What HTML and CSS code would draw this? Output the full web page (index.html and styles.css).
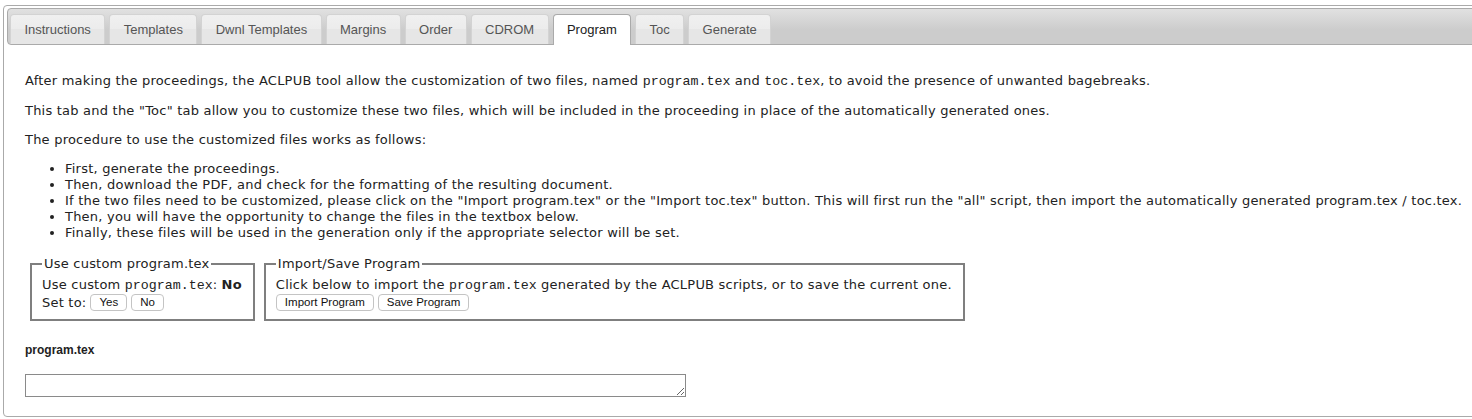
FILE: index.html
```html
<!DOCTYPE html>
<html>
<head>
<meta charset="utf-8">
<title>ACLPUB</title>
<link rel="stylesheet" href="styles.css">
</head>
<body>
<div class="widget">
  <ul class="nav">
    <li class="tab">Instructions</li>
    <li class="tab">Templates</li>
    <li class="tab">Dwnl Templates</li>
    <li class="tab">Margins</li>
    <li class="tab">Order</li>
    <li class="tab">CDROM</li>
    <li class="tab active">Program</li>
    <li class="tab">Toc</li>
    <li class="tab">Generate</li>
  </ul>
  <div class="panel">
    <p>After making the proceedings, the ACLPUB tool allow the customization of two files, named <code>program.tex</code> and <code>toc.tex</code>, to avoid the presence of unwanted bagebreaks.</p>
    <p>This tab and the "Toc" tab allow you to customize these two files, which will be included in the proceeding in place of the automatically generated ones.</p>
    <p>The procedure to use the customized files works as follows:</p>
    <ul class="steps">
      <li>First, generate the proceedings.</li>
      <li>Then, download the PDF, and check for the formatting of the resulting document.</li>
      <li>If the two files need to be customized, please click on the "Import program.tex" or the "Import toc.tex" button. This will first run the "all" script, then import the automatically generated program.tex / toc.tex.</li>
      <li>Then, you will have the opportunity to change the files in the textbox below.</li>
      <li>Finally, these files will be used in the generation only if the appropriate selector will be set.</li>
    </ul>
    <div class="boxes">
      <fieldset class="box">
        <legend>Use custom program.tex</legend>
        <div class="row">Use custom <code>program.tex</code>: <b>No</b></div>
        <div class="row btns">Set to: <button class="btn">Yes</button> <button class="btn">No</button></div>
      </fieldset>
      <fieldset class="box">
        <legend>Import/Save Program</legend>
        <div class="row">Click below to import the <code>program.tex</code> generated by the ACLPUB scripts, or to save the current one.</div>
        <div class="row btns"><button class="btn">Import Program</button> <button class="btn">Save Program</button></div>
      </fieldset>
    </div>
    <h4 class="label">program.tex</h4>
    <textarea class="editor"></textarea>
  </div>
</div>
</body>
</html>
```
FILE: styles.css
```css
html, body {
  margin: 0;
  padding: 0;
  background: #fff;
  overflow: hidden;
}
body {
  padding: 5px 0 0 3px;
}
.widget {
  width: 1490px;
  border: 1px solid #aaa;
  border-radius: 4px;
  padding: 2px 3px;
  background: #fff;
  color: #222;
  font-family: "DejaVu Sans", Verdana, sans-serif;
}
.nav {
  list-style: none;
  margin: 0;
  padding: 5px 2px 0 2px;
  display: flex;
  gap: 4px;
  border: 1px solid #aaa;
  border-radius: 4px;
  background: linear-gradient(#e1e1e1, #cccccc 60%, #cccccc);
  height: 30px;
  box-sizing: content-box;
}
.tab {
  font-family: "Liberation Sans", Arial, sans-serif;
  font-size: 13px;
  color: #555;
  line-height: 16px;
  padding: 7px 13.4px;
  border: 1px solid #d3d3d3;
  border-bottom: 0;
  border-radius: 4px 4px 0 0;
  background: linear-gradient(#f0f0f0 0%, #ececec 50%, #e6e6e6 50%, #e6e6e6 100%);
}
.tab.active {
  background: #fff;
  border-color: #aaa;
  color: #212121;
  padding-bottom: 8px;
  margin-bottom: -1px;
  position: relative;
}
.panel {
  padding: 15px 18px 17px 18px;
  font-size: 13px;
  line-height: 16px;
  letter-spacing: 0.22px;
}
.panel p {
  margin: 13px 0;
}
code {
  font-family: "Liberation Mono", "Courier New", monospace;
  font-size: 13.3px;
  letter-spacing: 0;
}
.steps {
  margin: 13px 0;
  padding-left: 40px;
}
.boxes {
  display: flex;
  gap: 9px;
  padding-left: 5px;
  margin-top: 15px;
  align-items: flex-start;
}
.box {
  margin: 0;
  border: 2px solid #7f7f7f;
  padding: 5px 11px 8px 10px;
  font-size: 13px;
  line-height: 16px;
}
.box legend {
  padding: 0 2px;
  font-size: 13px;
}
.row.btns {
  height: 17px;
  line-height: 17px;
  display: flex;
  align-items: center;
  gap: 4px;
}
.btn {
  font-family: "Liberation Sans", Arial, sans-serif;
  font-size: 11.5px;
  line-height: 13px;
  padding: 1px 8px;
  background: #fff;
  border: 1px solid #c4c4c4;
  border-radius: 4px;
  color: #111;
  margin: 0;
  letter-spacing: 0;
}
.label {
  font-family: "Liberation Sans", Arial, sans-serif;
  font-size: 12px;
  font-weight: bold;
  letter-spacing: 0;
  margin: 21px 0 16px 0;
}
.editor {
  display: block;
  width: 661px;
  height: 23px;
  box-sizing: border-box;
  border: 1px solid #8a8a8a;
  margin: 0;
  resize: both;
}
```
